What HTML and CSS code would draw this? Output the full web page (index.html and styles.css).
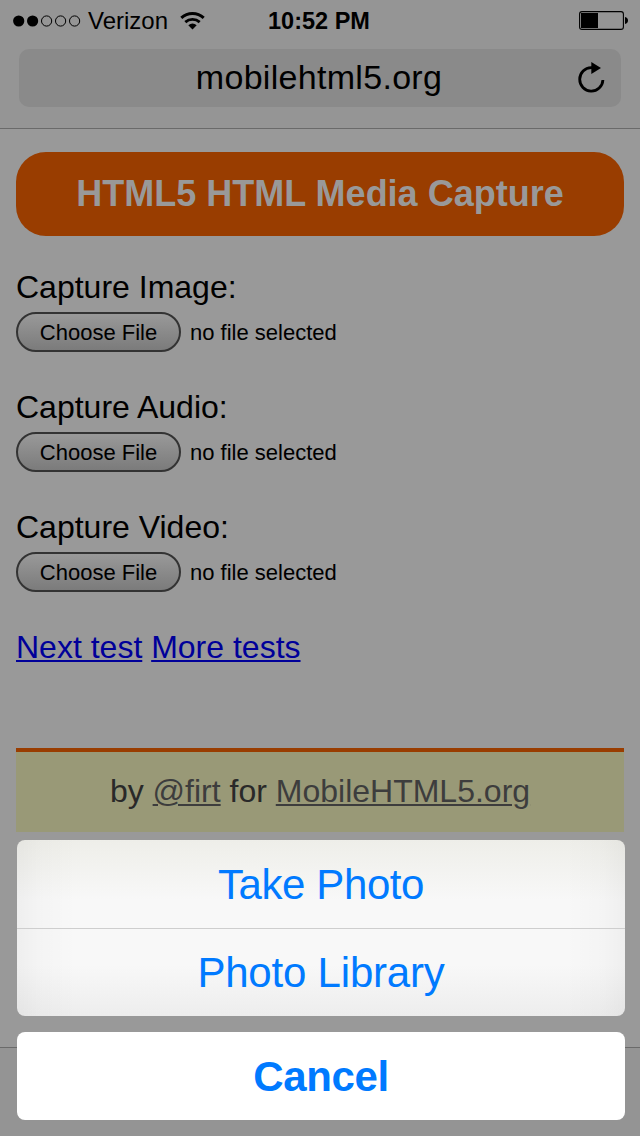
FILE: index.html
```html
<!DOCTYPE html>
<html lang="en">
<head>
<meta charset="utf-8">
<title>HTML5 HTML Media Capture</title>
<link rel="stylesheet" href="styles.css">
</head>
<body>
<div class="screen">
  <header class="chrome">
    <div class="status">
      <div class="carrier">
        <svg class="signal" width="68" height="12" viewBox="0 0 68 12"><circle cx="5.7" cy="6" r="5.6"/><circle cx="19.6" cy="6" r="5.6"/><g fill="none" stroke="#000" stroke-width="1"><circle cx="33.6" cy="6" r="5.1"/><circle cx="47.6" cy="6" r="5.1"/><circle cx="61.6" cy="6" r="5.1"/></g></svg>
        <span class="carrier-name">Verizon</span>
        <svg class="wifi" width="26" height="20" viewBox="0 0 26 20"><g fill="none" stroke="#000"><path d="M1.3 6.9A16.6 16.6 0 0 1 23.7 6.9" stroke-width="3"/><path d="M5.3 11.1A10.8 10.8 0 0 1 19.7 11.1" stroke-width="2.8"/></g><path d="M8.3 14.3Q12.5 10.7 16.7 14.3L12.5 18.6Z"/></svg>
      </div>
      <span class="time">10:52 PM</span>
      <svg class="battery" width="50" height="20" viewBox="0 0 50 20"><rect x=".6" y=".6" width="43.8" height="17.8" rx="2.4" fill="none" stroke="#000" stroke-width="1.1"/><path d="M2 2h17v15H2zM46 6q3 .6 3 3.5T46 13z"/></svg>
    </div>
    <div class="address">
      <span class="url">mobilehtml5.org</span>
      <svg class="reload" width="28" height="32" viewBox="0 0 28 32"><path d="M14.5 5.6H13.2A11.6 11.8 0 1 0 24.9 18" fill="none" stroke="#000" stroke-width="2.8"/><path d="M13.3 0L23 6.1L13.3 12Z"/></svg>
    </div>
  </header>
  <main class="page">
    <h1 class="title">HTML5 HTML Media Capture</h1>
    <section class="field"><span class="label">Capture Image:</span><div class="picker"><button class="choose">Choose File</button><span class="filename">no file selected</span></div></section>
    <section class="field"><span class="label">Capture Audio:</span><div class="picker"><button class="choose">Choose File</button><span class="filename">no file selected</span></div></section>
    <section class="field"><span class="label">Capture Video:</span><div class="picker"><button class="choose">Choose File</button><span class="filename">no file selected</span></div></section>
    <nav class="links"><a href="#">Next test</a> <a href="#">More tests</a></nav>
    <footer class="credit">by <a href="#">@firt</a> for <a href="#">MobileHTML5.org</a></footer>
  </main>
  <div class="toolbar"></div>
  <div class="sheet">
    <div class="actions">
      <button class="action">Take Photo</button>
      <button class="action library">Photo Library</button>
    </div>
    <button class="action cancel">Cancel</button>
  </div>
</div>
</body>
</html>
```
FILE: styles.css
```css
* { box-sizing: border-box; }
body { margin: 0; font-family: "Liberation Sans", Arial, sans-serif; color: #000; }
button { font: inherit; color: inherit; margin: 0; padding: 0; border: 0; background: none; }
svg { display: block; flex: none; }

.screen {
  position: relative;
  display: flex;
  flex-direction: column;
  width: 640px;
  height: 1136px;
  overflow: hidden;
  background: #999;
}

.chrome { height: 129px; background: #959595; border-bottom: 1px solid #6a6a6a; }
.status {
  display: grid;
  grid-template-columns: 1fr auto 1fr;
  align-items: center;
  height: 42px;
  padding: 0 10px 0 13px;
  font-size: 24px;
}
.carrier { display: flex; align-items: center; }
.signal { margin-top: -1px; }
.carrier-name { margin: 0 12px 0 7px; }
.wifi { margin-top: -1px; }
.time { margin-right: 5px; font-size: 23.5px; font-weight: bold; }
.battery { justify-self: end; margin: -1px 1px 0 0; }
.address {
  display: grid;
  grid-template-columns: 1fr 46px;
  align-items: center;
  height: 58px;
  margin: 7px 19px 0;
  padding-left: 44px;
  border-radius: 10px;
  background: #8a8a8a;
  text-align: center;
}
.url { font-size: 34px; letter-spacing: .3px; margin-top: -1px; }
.reload { margin: 0 0 0 3px; }

.page { flex: 1; padding: 23px 16px 0; font-size: 32px; line-height: 36px; }
.title {
  height: 84px;
  margin: 0 0 33px;
  border-radius: 30px;
  background: #993d00;
  color: #999;
  font-size: 36px;
  line-height: 84px;
  text-align: center;
}
.field { height: 120px; }
.label { display: block; height: 43px; }
.picker { display: flex; align-items: center; gap: 9px; font-size: 22px; }
.choose {
  width: 165px;
  height: 40px;
  padding-top: 1px;
  border: 2px solid #333;
  border-radius: 20px;
  background: linear-gradient(#999, #7b7b7b);
}
.filename { padding-top: 2px; }
.links { color: #000099; }
.links a, .credit a { color: inherit; text-decoration-thickness: 2px; text-underline-offset: 2px; }
.credit {
  height: 84px;
  margin-top: 83px;
  border-top: 4px solid #993d00;
  background: #999977;
  color: #292929;
  line-height: 78px;
  text-align: center;
}
.credit .credit-link, .credit a { color: #3d3d3d; }
.toolbar { height: 89px; border-top: 1px solid #6a6a6a; background: #949494; }

.sheet { position: absolute; left: 17px; right: 15px; bottom: 16px; color: #007aff; font-size: 42px; }
.actions {
  overflow: hidden;
  border-radius: 8px;
  background: #f8f8f8;
  background-image:
    linear-gradient(90deg, rgba(0,0,0,.04), rgba(0,0,0,.015) 22px, transparent 60px, transparent 548px, rgba(0,0,0,.015) 586px, rgba(0,0,0,.04)),
    linear-gradient(#eeeee9, #f8f8f8 60px, #f8f8f8 125px, #ededed);
}
.action { display: block; width: 100%; height: 88px; line-height: 90px; text-align: center; letter-spacing: -.4px; }
.library { border-top: 1px solid #cecece; line-height: 88px; letter-spacing: -.2px; }
.cancel { margin-top: 16px; border-radius: 8px; background: #fff; font-weight: bold; }
```
